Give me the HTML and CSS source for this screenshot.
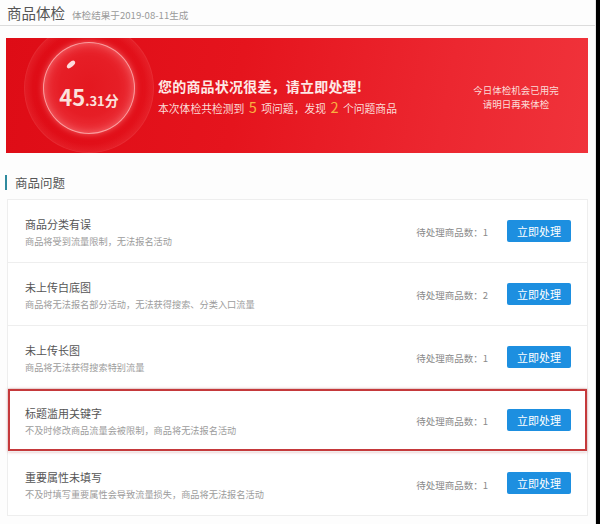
FILE: index.html
```html
<!DOCTYPE html>
<html lang="zh-CN">
<head>
<meta charset="utf-8">
<title>商品体检</title>
<link rel="stylesheet" href="styles.css">
</head>
<body>
<div class="page">
  <div class="header">
    <span class="title">商品体检</span>
    <span class="subtitle">体检结果于2019-08-11生成</span>
  </div>

  <div class="banner">
    <div class="score">
      <div class="sphere">
        <span class="big">45</span><span class="small">.31</span><span class="unit">分</span>
      </div>
    </div>
    <div class="summary">
      <div class="headline">您的商品状况很差，请立即处理!</div>
      <div class="detail">本次体检共检测到 <em>5</em> 项问题，发现 <em>2</em> 个问题商品</div>
    </div>
    <div class="notice">
      <div>今日体检机会已用完</div>
      <div>请明日再来体检</div>
    </div>
  </div>

  <div class="section-title">商品问题</div>

  <div class="list">
    <div class="row">
      <div class="info">
        <div class="name">商品分类有误</div>
        <div class="desc">商品将受到流量限制，无法报名活动</div>
      </div>
      <div class="count">待处理商品数：1</div>
      <button class="btn">立即处理</button>
    </div>
    <div class="row">
      <div class="info">
        <div class="name">未上传白底图</div>
        <div class="desc">商品将无法报名部分活动，无法获得搜索、分类入口流量</div>
      </div>
      <div class="count">待处理商品数：2</div>
      <button class="btn">立即处理</button>
    </div>
    <div class="row">
      <div class="info">
        <div class="name">未上传长图</div>
        <div class="desc">商品将无法获得搜索特别流量</div>
      </div>
      <div class="count">待处理商品数：1</div>
      <button class="btn">立即处理</button>
    </div>
    <div class="row highlight">
      <div class="info">
        <div class="name">标题滥用关键字</div>
        <div class="desc">不及时修改商品流量会被限制，商品将无法报名活动</div>
      </div>
      <div class="count">待处理商品数：1</div>
      <button class="btn">立即处理</button>
    </div>
    <div class="row last">
      <div class="info">
        <div class="name">重要属性未填写</div>
        <div class="desc">不及时填写重要属性会导致流量损失，商品将无法报名活动</div>
      </div>
      <div class="count">待处理商品数：1</div>
      <button class="btn">立即处理</button>
    </div>
  </div>
</div>
</body>
</html>
```

FILE: styles.css
```css
* { box-sizing: border-box; }

html, body {
  margin: 0;
  padding: 0;
  background: #000;
}

body {
  font-family: "Noto Sans CJK SC", "Noto Sans", sans-serif;
  color: #333;
}

.page {
  width: 596px;
  min-height: 524px;
  background: #fdfdfd;
  border-right: 1px solid #e6e6e6;
  overflow: hidden;
}

.header {
  height: 26px;
  padding: 0 7px;
  border-bottom: 1px solid #dcdcdc;
  display: flex;
  align-items: baseline;
}

.title {
  font-size: 14.5px;
  line-height: 25px;
  color: #555;
}

.subtitle {
  font-size: 9.6px;
  color: #9a9a9a;
  margin-left: 7px;
}

.banner {
  margin: 12px 7px 0 6px;
  height: 115px;
  background: linear-gradient(100deg, #de0c16 0%, #e5141d 40%, #ec2730 75%, #f0333b 100%);
  display: flex;
  align-items: center;
  overflow: hidden;
  position: relative;
}

.score {
  align-self: flex-start;
  margin-top: 4px;
  margin-left: 37px;
  position: relative;
}

.score::before {
  content: "";
  position: absolute;
  left: -18px;
  top: -18px;
  width: 128px;
  height: 128px;
  border-radius: 50%;
  background: radial-gradient(circle, rgba(255,90,90,0) 62%, rgba(255,130,130,0.18) 74%, rgba(255,90,90,0.08) 86%, rgba(255,80,80,0) 100%);
  box-shadow: 0 0 0 1px rgba(255,150,150,0.2);
}

.sphere {
  width: 92px;
  height: 92px;
  border-radius: 50%;
  position: relative;
  display: flex;
  align-items: baseline;
  justify-content: center;
  padding-top: 41px;
  color: #fbe2dc;
  background: radial-gradient(circle at 50% 48%, #e41820 0%, #e61e26 45%, #ec3139 70%, #f24a50 85%, #f66a6e 95%, #f88a8c 100%);
  box-shadow: inset 0 0 0 1px rgba(255,190,190,0.7), inset 0 0 10px rgba(255,170,170,0.55), 0 0 6px rgba(255,150,150,0.6);
}

.sphere::before {
  content: "";
  position: absolute;
  left: 23px;
  top: 20px;
  width: 10px;
  height: 5px;
  border-radius: 50%;
  background: rgba(255,240,240,0.9);
  transform: rotate(-42deg);
}

.big {
  font-size: 22px;
  font-weight: 700;
  line-height: 26px;
}

.small {
  font-size: 13px;
  font-weight: 700;
}

.unit {
  font-size: 14px;
  font-weight: 700;
}

.summary {
  margin-left: 23px;
  padding-top: 2px;
}

.headline {
  font-size: 14px;
  font-weight: 700;
  color: #fde9e6;
  line-height: 18px;
  letter-spacing: 0.2px;
}

.detail {
  margin-top: 3px;
  font-size: 10.8px;
  color: #fbdcd8;
  line-height: 18px;
}

.detail em {
  font-style: normal;
  font-size: 14.5px;
  color: #f9b040;
  padding: 0 2px;
}

.notice {
  margin-left: auto;
  width: 140px;
  margin-right: 2px;
  padding-top: 2px;
  text-align: center;
  font-size: 9.5px;
  line-height: 14px;
  color: #fbdcd8;
}

.section-title {
  margin: 22px 0 0 5px;
  padding-left: 8px;
  border-left: 2px solid #2f8a9e;
  font-size: 12.5px;
  line-height: 15px;
  color: #555;
}

.list {
  margin: 9px 7px 0 7px;
  border: 1px solid #eeeeee;
  background: #fff;
}

.row {
  height: 63px;
  display: flex;
  align-items: center;
  padding: 2px 16px 0 17px;
  border-bottom: 1px solid #eeeeee;
}

.row.last {
  border-bottom: none;
}

.row.highlight {
  box-shadow: inset 0 0 0 2px #c5393b, 0 0 3px rgba(180,40,40,0.35);
  position: relative;
}

.info {
  flex: 1;
}

.name {
  font-size: 11px;
  line-height: 16px;
  color: #555;
}

.desc {
  margin-top: 2px;
  font-size: 9.2px;
  line-height: 14px;
  color: #9c9c9c;
}

.count {
  font-size: 9.5px;
  color: #8a8a8a;
  margin-right: 19px;
}

.btn {
  width: 64px;
  height: 22px;
  border: none;
  border-radius: 2px;
  background: #1d8fe0;
  color: #fff;
  font-family: inherit;
  font-size: 11px;
  line-height: 22px;
  padding: 0;
  margin-bottom: 3px;
}
```
